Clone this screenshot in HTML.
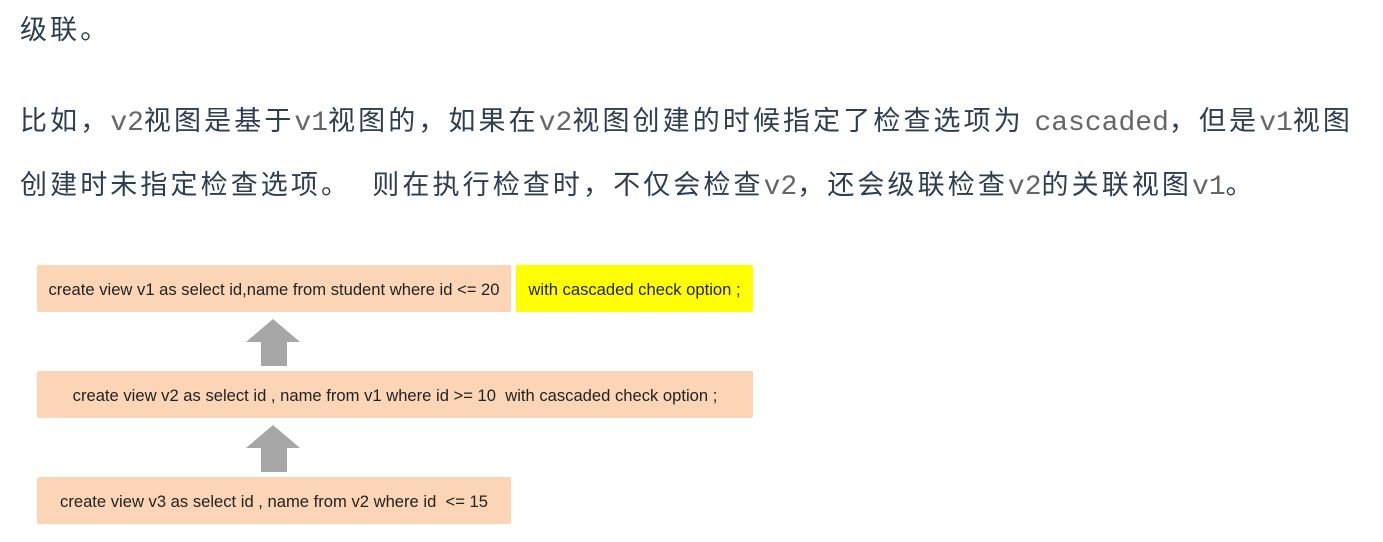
<!DOCTYPE html>
<html><head><meta charset="utf-8"><style>
body{margin:0;width:1383px;height:542px;background:#fff;position:relative;overflow:hidden;font-family:"Liberation Sans","Noto Sans CJK SC",sans-serif;color:#2c3e50;}
.l{position:absolute;left:20px;font-size:27px;white-space:nowrap;line-height:40px;letter-spacing:3.1px;}
code{font-family:"Liberation Mono","Courier New",monospace;color:#666;font-size:28px;letter-spacing:0;}
.b{position:absolute;background:#fbd5b5;border-radius:2px;font-family:"Liberation Sans","DejaVu Sans",sans-serif;font-size:16.6px;color:#222;display:flex;align-items:center;justify-content:center;height:47px;white-space:nowrap;padding-top:2px;box-sizing:border-box;}
.y{background:#ffff00;}
</style></head><body>
<div class="l" style="top:10px">级联。</div>
<div class="l" style="top:101px">比如，<code>v2</code>视图是基于<code>v1</code>视图的，如果在<code>v2</code>视图创建的时候指定了检查选项为 <code>cascaded</code>，但是<code>v1</code>视图</div>
<div class="l" style="top:165px">创建时未指定检查选项。 &nbsp;则在执行检查时，不仅会检查<code>v2</code>，还会级联检查<code>v2</code>的关联视图<code>v1</code>。</div>
<div class="b" style="left:37px;top:265px;width:474px">create view v1 as select id,name from student where id &lt;= 20</div>
<div class="b y" style="left:516px;top:265px;width:237px">with cascaded check option ;</div>
<svg style="position:absolute;left:246px;top:319px" width="55" height="48"><polygon points="27,0 54,23 41,23 41,47 15,47 15,23 0,23" fill="#a6a6a6"/></svg>
<div class="b" style="left:37px;top:371px;width:716px">create view v2 as select id , name from v1 where id &gt;= 10 &nbsp;with cascaded check option ;</div>
<svg style="position:absolute;left:246px;top:425px" width="55" height="48"><polygon points="27,0 54,23 41,23 41,47 15,47 15,23 0,23" fill="#a6a6a6"/></svg>
<div class="b" style="left:37px;top:477px;width:474px">create view v3 as select id , name from v2 where id &nbsp;&lt;= 15</div>
</body></html>
